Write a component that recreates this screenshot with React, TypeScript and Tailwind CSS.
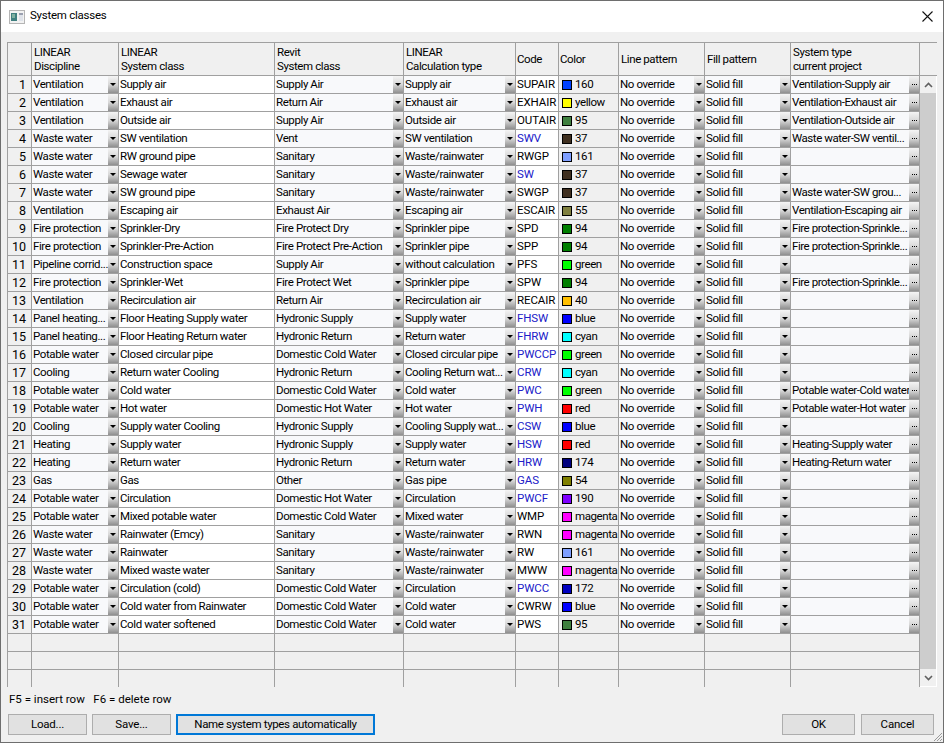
import React from "react";

const font = "[font-family:'Roboto',sans-serif]";

type Row = [string, string, string, string, string, boolean, string, string, string];

const rows: Row[] = [
  ["Ventilation", "Supply air", "Supply Air", "Supply air", "SUPAIR", false, "#0040ff", "160", "Ventilation-Supply air"],
  ["Ventilation", "Exhaust air", "Return Air", "Exhaust air", "EXHAIR", false, "#ffff00", "yellow", "Ventilation-Exhaust air"],
  ["Ventilation", "Outside air", "Supply Air", "Outside air", "OUTAIR", false, "#3f7f3f", "95", "Ventilation-Outside air"],
  ["Waste water", "SW ventilation", "Vent", "SW ventilation", "SWV", true, "#3f2f1f", "37", "Waste water-SW ventil..."],
  ["Waste water", "RW ground pipe", "Sanitary", "Waste/rainwater", "RWGP", false, "#7f9fff", "161", ""],
  ["Waste water", "Sewage water", "Sanitary", "Waste/rainwater", "SW", true, "#3f2f1f", "37", ""],
  ["Waste water", "SW ground pipe", "Sanitary", "Waste/rainwater", "SWGP", false, "#3f2f1f", "37", "Waste water-SW grou..."],
  ["Ventilation", "Escaping air", "Exhaust Air", "Escaping air", "ESCAIR", false, "#7f7f3f", "55", "Ventilation-Escaping air"],
  ["Fire protection", "Sprinkler-Dry", "Fire Protect Dry", "Sprinkler pipe", "SPD", false, "#007f00", "94", "Fire protection-Sprinkle..."],
  ["Fire protection", "Sprinkler-Pre-Action", "Fire Protect Pre-Action", "Sprinkler pipe", "SPP", false, "#007f00", "94", "Fire protection-Sprinkle..."],
  ["Pipeline corrid...", "Construction space", "Supply Air", "without calculation", "PFS", false, "#00ff00", "green", ""],
  ["Fire protection", "Sprinkler-Wet", "Fire Protect Wet", "Sprinkler pipe", "SPW", false, "#007f00", "94", "Fire protection-Sprinkle..."],
  ["Ventilation", "Recirculation air", "Return Air", "Recirculation air", "RECAIR", false, "#ffbf00", "40", ""],
  ["Panel heating...", "Floor Heating Supply water", "Hydronic Supply", "Supply water", "FHSW", true, "#0000ff", "blue", ""],
  ["Panel heating...", "Floor Heating Return water", "Hydronic Return", "Return water", "FHRW", true, "#00ffff", "cyan", ""],
  ["Potable water", "Closed circular pipe", "Domestic Cold Water", "Closed circular pipe", "PWCCP", true, "#00ff00", "green", ""],
  ["Cooling", "Return water Cooling", "Hydronic Return", "Cooling Return wat...", "CRW", true, "#00ffff", "cyan", ""],
  ["Potable water", "Cold water", "Domestic Cold Water", "Cold water", "PWC", true, "#00ff00", "green", "Potable water-Cold water"],
  ["Potable water", "Hot water", "Domestic Hot Water", "Hot water", "PWH", true, "#ff0000", "red", "Potable water-Hot water"],
  ["Cooling", "Supply water Cooling", "Hydronic Supply", "Cooling Supply wat...", "CSW", true, "#0000ff", "blue", ""],
  ["Heating", "Supply water", "Hydronic Supply", "Supply water", "HSW", true, "#ff0000", "red", "Heating-Supply water"],
  ["Heating", "Return water", "Hydronic Return", "Return water", "HRW", true, "#00007f", "174", "Heating-Return water"],
  ["Gas", "Gas", "Other", "Gas pipe", "GAS", true, "#7f7f00", "54", ""],
  ["Potable water", "Circulation", "Domestic Hot Water", "Circulation", "PWCF", true, "#7f00ff", "190", ""],
  ["Potable water", "Mixed potable water", "Domestic Cold Water", "Mixed water", "WMP", false, "#ff00ff", "magenta", ""],
  ["Waste water", "Rainwater (Emcy)", "Sanitary", "Waste/rainwater", "RWN", false, "#ff00ff", "magenta", ""],
  ["Waste water", "Rainwater", "Sanitary", "Waste/rainwater", "RW", false, "#7f9fff", "161", ""],
  ["Waste water", "Mixed waste water", "Sanitary", "Waste/rainwater", "MWW", false, "#ff00ff", "magenta", ""],
  ["Potable water", "Circulation (cold)", "Domestic Cold Water", "Circulation", "PWCC", true, "#0000bf", "172", ""],
  ["Potable water", "Cold water from Rainwater", "Domestic Cold Water", "Cold water", "CWRW", false, "#0000ff", "blue", ""],
  ["Potable water", "Cold water softened", "Domestic Cold Water", "Cold water", "PWS", false, "#3f7f3f", "95", ""],
];

const cols = "grid grid-cols-[24px_87px_156px_129px_112px_43px_60px_86px_86px_129px]";
const line = "border-r border-[#a0a0a0]";

function Arrow({ dots }: { dots?: boolean }) {
  return (
    <span className="absolute right-0 top-0 bottom-0 w-2.5 flex items-center justify-center bg-gradient-to-b from-[#f4f4f4] via-[#d8d8d8] to-[#8f8f8f]">
      {dots ? (
        <span className="flex gap-px">
          <i className="w-px h-px bg-black" />
          <i className="w-px h-px bg-black" />
          <i className="w-px h-px bg-black" />
        </span>
      ) : (
        <span className="w-0 h-0 border-x-[3px] border-x-transparent border-t-[3px] border-t-black" />
      )}
    </span>
  );
}

function Cell({ text, select, dots, white, tight }: { text: string; select?: boolean; dots?: boolean; white?: boolean; tight?: boolean }) {
  return (
    <div className={`relative h-[18px] ${line} border-b ${white ? "bg-white" : "bg-[#f8f9fb]"} ${tight ? "tracking-[-0.45px]" : ""} pl-[1px] leading-[16px] whitespace-nowrap overflow-hidden`}>
      {text}
      {(select || dots) && <Arrow dots={dots} />}
    </div>
  );
}

function Head({ a, b, left }: { a?: string; b: string; left?: string }) {
  return (
    <div className={`${line} border-b h-[33px] flex flex-col justify-center ${left ?? "pl-[2px]"} leading-[14px] bg-[#f0f0f0]`}>
      {a && <span>{a}</span>}
      <span>{b}</span>
    </div>
  );
}

function Btn({ children, w, focus }: { children: React.ReactNode; w: string; focus?: boolean }) {
  return (
    <button className={`${w} h-[21px] flex items-center justify-center bg-[#e1e1e1] ${focus ? "border-2 border-[#0078d7]" : "border border-[#adadad]"}`}>
      {children}
    </button>
  );
}

export default function App() {
  return (
    <div className={`w-[944px] h-[743px] relative overflow-hidden bg-[#f0f0f0] border border-[#6e6e6e] text-[11.5px] tracking-[-0.4px] text-black ${font} flex flex-col`}>
      <div className="h-[31px] shrink-0 bg-white flex items-center pl-2">
        <svg width="16" height="14" viewBox="0 0 16 14" className="mr-[5px]">
          <rect x="0.5" y="0.5" width="15" height="13" fill="#f2f2f2" stroke="#b5b5b5" />
          <rect x="2" y="3" width="6" height="8" fill="#3f7f7f" />
          <rect x="3" y="4" width="3" height="4" fill="#7fb0a0" />
          <rect x="10" y="3" width="4" height="8" fill="#dfe3ea" />
          <rect x="10" y="3" width="4" height="2" fill="#9aa0b0" />
        </svg>
        <span className="text-[11.5px] tracking-[-0.25px] -mt-[1px]">System classes</span>
        <svg width="11" height="11" viewBox="0 0 11 11" className="ml-auto mr-[10px]" stroke="#111" strokeWidth="1.1">
          <path d="M0.5 0.5 L10.5 10.5 M10.5 0.5 L0.5 10.5" />
        </svg>
      </div>

      <div className="flex-1 min-h-0 flex flex-col px-[6px] pt-[10px]">
        <div className="w-[930px] h-[645px] shrink-0 border-l border-t border-[#a0a0a0] relative bg-[#f0f0f0] overflow-hidden">
          <div className={cols}>
            <div className={`${line} border-b h-[33px]`} />
            <Head a="LINEAR" b="Discipline" />
            <Head a="LINEAR" b="System class" />
            <Head a="Revit" b="System class" />
            <Head a="LINEAR" b="Calculation type" />
            <Head b="Code" left="pl-[1px]" />
            <Head b="Color" left="pl-[1px]" />
            <Head b="Line pattern" />
            <Head b="Fill pattern" />
            <Head a="System type" b="current project" />
          </div>
          {rows.map((r, i) => (
            <div key={i} className={cols}>
              <div className={`h-[18px] ${line} border-b bg-[#f0f0f0] text-right pr-[5px] leading-[18px] text-[12.5px] tracking-normal`}>{i + 1}</div>
              <Cell text={r[0]} select />
              <Cell text={r[1]} white />
              <Cell text={r[2]} select />
              <Cell text={r[3]} select />
              <div className={`h-[18px] ${line} border-b bg-white pl-[1px] leading-[16px] tracking-[-0.1px] overflow-hidden whitespace-nowrap ${r[5] ? "text-[#2020c8]" : ""}`}>{r[4]}</div>
              <div className={`h-[18px] ${line} border-b bg-[#f0f0f0] pl-[3px] flex items-center gap-[3px] overflow-hidden whitespace-nowrap`}>
                <span className="w-[10px] h-[10px] border border-black shrink-0" style={{ backgroundColor: r[6] }} />
                <span className="leading-[16px] -mt-[1px]">{r[7]}</span>
              </div>
              <Cell text="No override" select />
              <Cell text="Solid fill" select />
              <Cell text={r[8]} dots tight />
            </div>
          ))}
          {[0, 1, 2].map((i) => (
            <div key={i} className={cols}>
              {Array.from({ length: 10 }).map((_, j) => (
                <div key={j} className={`h-[18px] ${line} ${i < 2 ? "border-b" : ""}`} />
              ))}
            </div>
          ))}
          <div className="absolute left-[912px] right-0 top-[32px] bottom-0 bg-white border-t border-[#a0a0a0] flex flex-col items-stretch pr-px pb-px">
            <div className="h-[17px] bg-[#f0f0f0] flex items-center justify-center">
              <svg width="9" height="6" viewBox="0 0 9 6" fill="none" stroke="#606060" strokeWidth="1.6"><path d="M1 5 L4.5 1.5 L8 5" /></svg>
            </div>
            <div className="flex-1 bg-[#cdcdcd]" />
            <div className="h-[17px] bg-[#f0f0f0] flex items-center justify-center">
              <svg width="9" height="6" viewBox="0 0 9 6" fill="none" stroke="#606060" strokeWidth="1.6"><path d="M1 1 L4.5 4.5 L8 1" /></svg>
            </div>
          </div>
        </div>

        <div className="mt-[4px] ml-[2px] h-[17px] leading-[17px] tracking-normal">
          F5 = insert row&nbsp;&nbsp; F6 = delete row
        </div>

        <div className="mt-[6px] ml-[1px] flex gap-[5px] tracking-[-0.2px]">
          <Btn w="w-[79px]">Load...</Btn>
          <Btn w="w-[79px]">Save...</Btn>
          <Btn w="w-[199px]" focus><span className="tracking-[-0.35px]">Name system types automatically</span></Btn>
          <div className="ml-auto flex gap-[6px] mr-[3px]">
            <Btn w="w-[73px]">OK</Btn>
            <Btn w="w-[73px]">Cancel</Btn>
          </div>
        </div>
      </div>

      <svg width="12" height="12" viewBox="0 0 12 12" className="absolute right-0 bottom-0" stroke="#9a9a9a">
        <path d="M11 3 L3 11 M11 6 L6 11 M11 9 L9 11" />
      </svg>
    </div>
  );
}
